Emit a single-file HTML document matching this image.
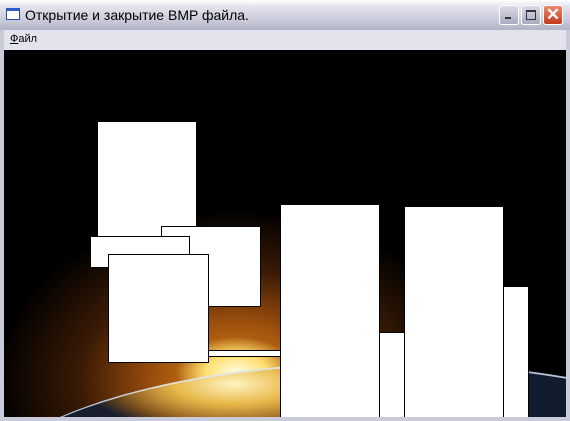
<!DOCTYPE html><html><head><style>
html,body{margin:0;width:570px;height:421px;overflow:hidden;font-family:"Liberation Sans",sans-serif}
.win{position:absolute;left:0;top:0;width:570px;height:421px;background:#c9cbd8;border-radius:6px 6px 0 0;overflow:hidden}
.title{position:absolute;left:0;top:0;width:570px;height:30px;border-radius:6px 6px 0 0;background:linear-gradient(#fff 0,#e4e5ee 20%,#c8c9d8 70%,#b0b2c6 100%)}
.title span{position:absolute;left:25px;top:7px;font-size:14px;color:#000}
.ico{position:absolute;left:6px;top:8px;width:14px;height:12px;border:1px solid #2b4f9e;border-top:3px solid #2b5fc9;background:#fff;box-sizing:border-box}
.btn{position:absolute;top:5px;width:20px;height:20px;border-radius:3px;border:1px solid #fff;box-sizing:border-box;background:linear-gradient(#d9dae6,#a8aac0)}
.menu{position:absolute;left:4px;top:30px;width:562px;height:20px;background:#e2e3ec;font-size:11px}
.menu span{position:absolute;left:6px;top:3px}
.cl{position:absolute;left:4px;top:50px;width:562px;height:367px;overflow:hidden;background:
radial-gradient(ellipse 60px 35px at 232px 322px,#fffbe0 0,#ffe070 50%,rgba(255,180,40,0) 100%),
radial-gradient(ellipse 240px 170px at 232px 330px,#e08a1c 0,#9a4e0c 35%,#3a1a05 65%,#000 100%);}
.pl{position:absolute;left:-40px;top:312px;width:840px;height:300px;border-radius:50%;border-top:2px solid rgba(220,235,255,.8);background:radial-gradient(ellipse 150px 50px at 270px 20px,#fff4c0 0,#e8b84a 40%,rgba(120,90,40,.6) 80%,rgba(20,30,50,.9) 100%)}
.r{position:absolute;background:#fff;border:1px solid #000;box-sizing:border-box}
</style></head><body><div class="win">
<div class="title"><div class="ico"></div><span>Открытие и закрытие BMP файла.</span>
<div class="btn" style="left:499px"><div style="position:absolute;left:5px;top:11px;width:6px;height:2px;background:#333"></div></div>
<div class="btn" style="left:521px"><div style="position:absolute;left:4px;top:4px;width:10px;height:10px;border:1px solid #333;border-top-width:2px;box-sizing:border-box"></div></div>
<div class="btn" style="left:543px;background:linear-gradient(#e88a6a,#c23b1c);color:#fff;font-size:17px;text-align:center;line-height:18px;font-weight:bold">✕</div>
</div>
<div class="menu"><span><u>Ф</u>айл</span></div>
<div class="cl">
<div class="pl"></div>
<div class="r" style="left:94px;top:72px;width:98px;height:114px;border:none"></div>
<div class="r" style="left:157px;top:176px;width:100px;height:81px"></div>
<div class="r" style="left:86px;top:186px;width:100px;height:32px"></div>
<div class="r" style="left:104px;top:204px;width:101px;height:109px"></div>
<div class="r" style="left:204px;top:300px;width:74px;height:7px"></div>
<div class="r" style="left:276px;top:154px;width:100px;height:215px"></div>
<div class="r" style="left:375px;top:282px;width:26px;height:87px"></div>
<div class="r" style="left:400px;top:156px;width:100px;height:213px"></div>
<div class="r" style="left:499px;top:236px;width:26px;height:133px"></div>
</div></div></body></html>
